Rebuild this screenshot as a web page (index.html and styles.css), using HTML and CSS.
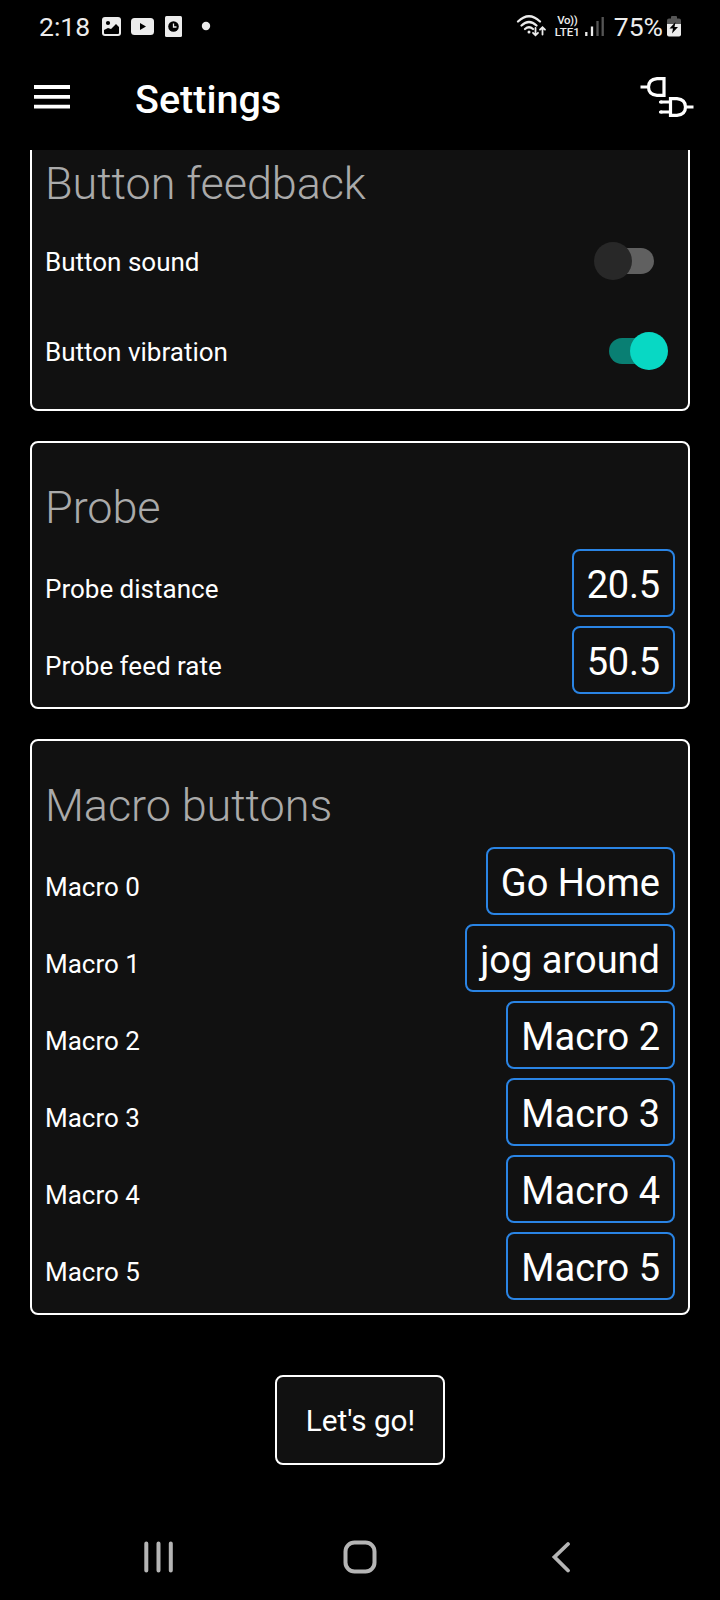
FILE: index.html
```html
<!DOCTYPE html>
<html lang="en">
<head>
<meta charset="utf-8">
<title>Settings</title>
<link rel="stylesheet" href="styles.css">
</head>
<body>
<div class="screen">
  <div class="status">
    <span class="clock">2:18</span>
    <svg class="notifications" width="110" height="24" viewBox="0 0 110 24">
      <rect x="0" y="3" width="19" height="19" rx="3" fill="#ececec"/>
      <circle cx="6" cy="9" r="2.1" fill="#000"/>
      <path d="M2 19v-3l4-2 3 1 5-5 3 3v6q0 1-1 1H3q-1 0-1-1z" fill="#000"/>
      <rect x="29" y="4" width="23" height="17" rx="3.5" fill="#ececec"/>
      <path d="M38 9l6 3.500-6 3.500z" fill="#000"/>
      <rect x="63" y="2" width="17" height="21" rx="1.500" fill="#ececec"/>
      <circle cx="71.500" cy="12.500" r="5.300" fill="#000"/>
      <path d="M71.500 9.500v3.500h3" fill="none" stroke="#ececec" stroke-width="1.300"/>
      <circle cx="104" cy="12" r="4.200" fill="#ececec"/>
    </svg>
    <span class="spacer"></span>
    <svg class="wifi" width="32" height="24" viewBox="0 0 32 24" fill="none" stroke="#ececec" stroke-width="2.200" stroke-linecap="round">
      <path d="M2 7.500q11-10.500 22 0M5.500 11.500q7.500-7 15 0M9 15q4-3.500 8 0"/>
      <circle cx="13" cy="18" r="1.500" fill="#ececec" stroke="none"/>
      <path d="M19.500 14v7M17 18.800l2.500 2.500 2.500-2.500M26.500 20.500v-7M24 15.700l2.500-2.500 2.500 2.500" stroke-width="1.800"/>
    </svg>
    <span class="volte"><span class="vo">Vo))</span><span>LTE1</span></span>
    <svg class="signal" width="20" height="22" viewBox="0 0 20 22">
      <path d="M1.300 17v4M7 11.500V21" stroke="#ececec" stroke-width="2.300"/>
      <path d="M12.500 6v15M17.700 2v19" stroke="#555" stroke-width="2.300"/>
    </svg>
    <span class="percent">75%</span>
    <svg class="battery" width="14" height="21" viewBox="0 0 14 21">
      <path d="M0 8V4.500Q0 2.500 2 2.500h2V1q0-1 1-1h4q1 0 1 1v1.500h2q2 0 2 2V8z" fill="#555"/>
      <path d="M0 8h14v10.500q0 2-2 2H2q-2 0-2-2z" fill="#ececec"/>
      <path d="M8.500 6L2.500 12.500h3.500L5 17.500l6-6.500H7.500z" fill="#000"/>
    </svg>
  </div>
  <header class="appbar">
    <svg width="36" height="24" viewBox="0 0 36 24"><path d="M0 2h36M0 11.800h36M0 21.700h36" stroke="#fff" stroke-width="3.800"/></svg>
    <h1 class="title">Settings</h1>
    <span class="spacer"></span>
    <svg width="54" height="42" viewBox="0 0 54 42" fill="none" stroke="#fff" stroke-width="3.200">
      <path d="M0.500 11h8M24 2.600v16.800H17Q8.500 18.500 8.500 11T17 2.600z"/>
      <path d="M45.500 31h8M30.500 22.600v16.800H37Q45.500 38.500 45.500 31T37 22.600zM20.500 26h10M20.500 36h10" />
      <path d="M20.500 26h1M20.500 36h1" stroke-linecap="round"/>
    </svg>
  </header>
  <main class="content">
    <section class="card scrolled">
      <h2 class="heading">Button feedback</h2>
      <div class="toggle-row"><span class="label">Button sound</span><span class="switch off"><span class="thumb"></span></span></div>
      <div class="toggle-row"><span class="label">Button vibration</span><span class="switch on"><span class="thumb"></span></span></div>
    </section>
    <section class="card">
      <h2 class="heading">Probe</h2>
      <div class="rows">
        <div class="row"><span class="label">Probe distance</span><span class="value number">20.5</span></div>
        <div class="row"><span class="label">Probe feed rate</span><span class="value number">50.5</span></div>
      </div>
    </section>
    <section class="card">
      <h2 class="heading">Macro buttons</h2>
      <div class="rows">
        <div class="row"><span class="label">Macro 0</span><span class="value">Go Home</span></div>
        <div class="row"><span class="label">Macro 1</span><span class="value">jog around</span></div>
        <div class="row"><span class="label">Macro 2</span><span class="value">Macro 2</span></div>
        <div class="row"><span class="label">Macro 3</span><span class="value">Macro 3</span></div>
        <div class="row"><span class="label">Macro 4</span><span class="value">Macro 4</span></div>
        <div class="row"><span class="label">Macro 5</span><span class="value">Macro 5</span></div>
      </div>
    </section>
    <button class="go">Let's go!</button>
  </main>
  <nav class="navbar">
    <svg width="30" height="32" viewBox="0 0 30 32"><path d="M2.300 2.500v27M14.500 2.500v27M26.800 2.500v27" stroke="#b5b5b5" stroke-width="4" stroke-linecap="round"/></svg>
    <svg class="home" width="34" height="34" viewBox="0 0 34 34"><rect x="2.500" y="2.500" width="29" height="29" rx="9" fill="none" stroke="#b5b5b5" stroke-width="4"/></svg>
    <svg width="20" height="32" viewBox="0 0 20 32"><path d="M17 3L3.500 16 17 29.500" fill="none" stroke="#b5b5b5" stroke-width="3.800" stroke-linecap="round"/></svg>
  </nav>
</div>
</body>
</html>
```
FILE: styles.css
```css
* { box-sizing: border-box; }
body { margin: 0; background: #000; color: #fff; font-family: Roboto, sans-serif; }
svg { display: block; flex: none; }
h1, h2 { margin: 0; }
.screen { width: 720px; height: 1600px; display: flex; flex-direction: column; overflow: hidden; }
.spacer { flex: 1; }

.status { height: 52px; display: flex; align-items: center; padding: 0 39px 0 39px; color: #ececec; }
.clock { width: 63px; font-size: 26.5px; }
.wifi { margin-right: 6px; }
.volte { display: flex; flex-direction: column; align-items: center; width: 27px; font-size: 11.5px; line-height: 12px; font-weight: 500; }
.vo { letter-spacing: -0.4px; }
.signal { margin-left: 4px; }
.percent { margin: 0 4px 0 9px; font-size: 26.5px; }

.appbar { height: 98px; display: flex; align-items: center; padding: 0 26px 8px 34px; }
.title { margin-left: 65px; padding-top: 4px; font-size: 39.5px; line-height: 47px; font-weight: 500; }

.content { height: 1350px; display: flex; flex-direction: column; align-items: center; overflow: hidden; }
.card { width: 660px; flex: none; margin-bottom: 30px; padding: 38px 13px 13px; background: #111; border: 2px solid #fff; border-radius: 8px; }
.scrolled { margin-top: -33px; height: 294px; }
.heading { height: 68px; font-size: 45px; line-height: 54px; font-weight: 300; letter-spacing: -0.08px; color: #aaa; }
.rows { display: flex; flex-direction: column; gap: 9px; }
.row { height: 68px; display: flex; justify-content: space-between; align-items: baseline; }
.label { font-size: 26px; }
.value { height: 68px; padding: 0 13px; border: 2px solid #2a84e4; border-radius: 8px; font-size: 38px; line-height: 69px; }
.number { letter-spacing: -0.2px; }
.toggle-row { height: 90px; display: flex; justify-content: space-between; align-items: center; margin-top: -9px; margin-bottom: 9px; }
.toggle-row .label { padding-top: 2px; }
.switch { width: 55px; height: 26px; display: flex; align-items: center; border-radius: 13px; }
.thumb { width: 38px; height: 38px; flex: none; border-radius: 50%; }
.off { background: #606060; margin-right: 21px; }
.off .thumb { margin-left: -5px; background: #282828; }
.on { background: #097f73; margin-right: 11px; justify-content: flex-end; }
.on .thumb { margin-right: -4px; background: #08d8c4; }

.go { width: 170px; height: 90px; flex: none; margin-top: 30px; padding: 0 0 0 1px; background: #111; border: 2px solid #fff; border-radius: 8px; color: #fff; font: 29.700px Roboto, sans-serif; }
.navbar { height: 100px; display: flex; align-items: center; justify-content: space-between; padding: 13px 149px 0 144px; }
.home { margin-right: 6px; }
```
